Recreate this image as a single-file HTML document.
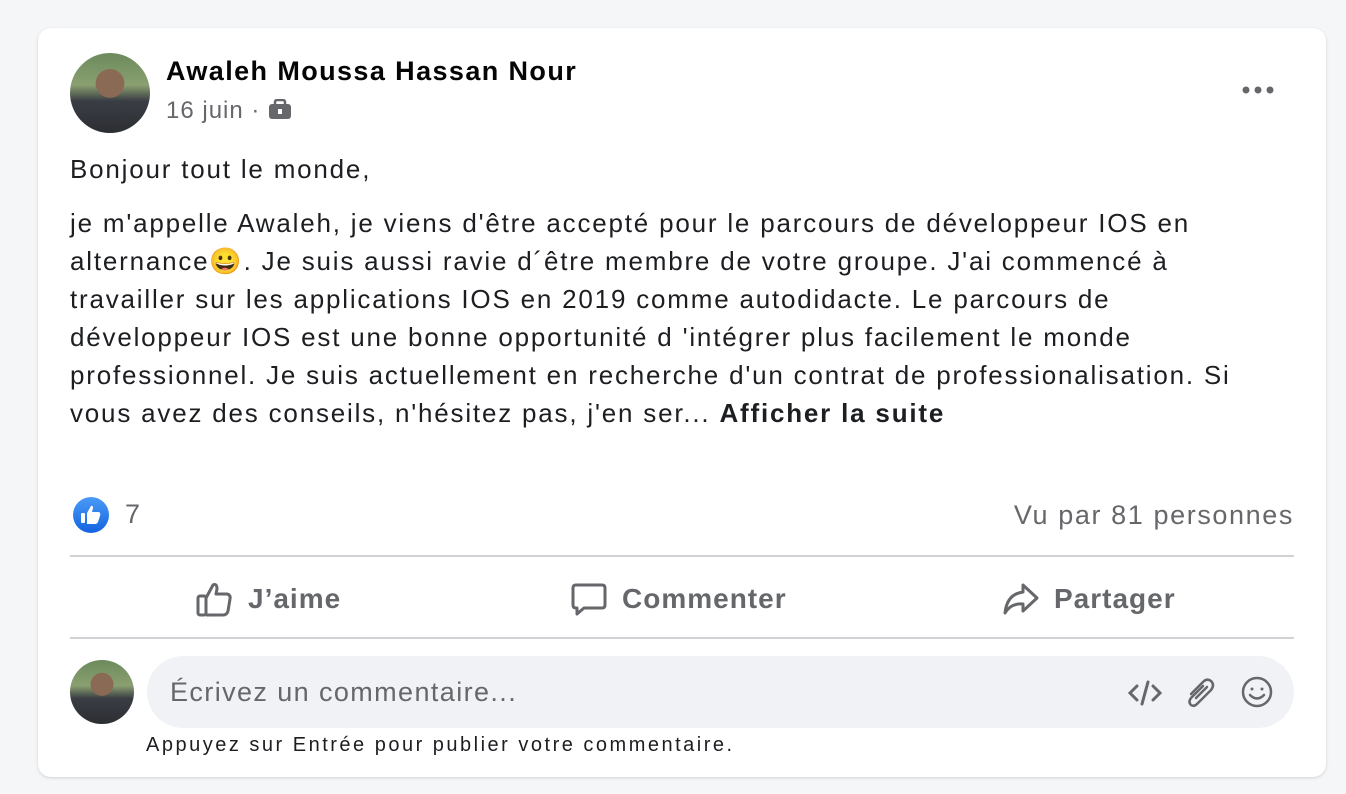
<!DOCTYPE html>
<html><head><meta charset="utf-8"><style>
*{box-sizing:border-box;margin:0;padding:0}
body{width:1346px;height:794px;background:#f5f6f8;font-family:"Liberation Sans",sans-serif;position:relative;overflow:hidden}
.card{position:absolute;left:38px;top:28px;width:1288px;height:749px;background:#fff;border-radius:13px;box-shadow:0 1px 3px rgba(0,0,0,.15)}
.abs{position:absolute;white-space:nowrap}
.av{border-radius:50%;background:radial-gradient(circle at 50% 38%,#8a6a55 0 22%,transparent 23%),linear-gradient(180deg,#6c8a5c 0%,#8aa070 40%,#3a3d44 60%,#2c2e33 100%);overflow:hidden}
.txt{left:32px;top:122px;font-size:26px;line-height:38px;color:#1c1e21;letter-spacing:1.8px}
.g{color:#65676b}
.line{position:absolute;left:32px;width:1224px;height:2px;background:#d0d2d6}
.btn{font-size:28px;font-weight:bold;color:#65676b;display:flex;align-items:center;gap:14px;letter-spacing:1px}
</style></head><body>
<div class="card">
 <div class="abs av" style="left:32px;top:25px;width:80px;height:80px"></div>
 <div class="abs" style="left:128px;top:28px;font-size:27px;font-weight:bold;color:#050505;letter-spacing:1.4px">Awaleh Moussa Hassan Nour</div>
 <div class="abs g" style="left:128px;top:69px;font-size:24px;letter-spacing:1px">16 juin · <svg width="24" height="22" viewBox="0 0 24 22" style="vertical-align:-3px"><rect x="1" y="5" width="22" height="15" rx="3" fill="#65676b"/><rect x="7" y="1" width="10" height="6" rx="2" fill="none" stroke="#65676b" stroke-width="2.5"/><rect x="10" y="10" width="4" height="5" fill="#fff"/></svg></div>
 <div class="abs" style="left:1203px;top:54px">
  <svg width="34" height="10"><circle cx="5" cy="5" r="3.5" fill="#65676b"/><circle cx="17" cy="5" r="3.5" fill="#65676b"/><circle cx="29" cy="5" r="3.5" fill="#65676b"/></svg></div>
 <div class="abs txt">Bonjour tout le monde,</div>
 <div class="abs txt" style="top:176px">je m'appelle Awaleh, je viens d'être accepté pour le parcours de développeur IOS en<br>alternance😀. Je suis aussi ravie d´être membre de votre groupe. J'ai commencé à<br>travailler sur les applications IOS en 2019 comme autodidacte. Le parcours de<br>développeur IOS est une bonne opportunité d 'intégrer plus facilement le monde<br>professionnel. Je suis actuellement en recherche d'un contrat de professionalisation. Si<br>vous avez des conseils, n'hésitez pas, j'en ser... <b>Afficher la suite</b></div>
 <svg class="abs" style="left:35px;top:469px" width="36" height="36" viewBox="0 0 36 36"><defs><linearGradient id="b" x1="0" y1="0" x2="0" y2="1"><stop offset="0" stop-color="#4a9bf7"/><stop offset="1" stop-color="#1463e0"/></linearGradient></defs><circle cx="18" cy="18" r="18" fill="url(#b)"/><rect x="8" y="16" width="4" height="10" rx="1" fill="#fff"/><path d="M14 16 L18 9 Q20 8 20 11 L19 15 H26 Q28 16 27 19 L25 25 Q24 27 22 27 H14 Z" fill="#fff"/></svg>
 <div class="abs g" style="left:87px;top:471px;font-size:27px">7</div>
 <div class="abs g" style="right:32px;top:472px;font-size:27px;letter-spacing:1.6px">Vu par 81 personnes</div>
 <div class="line" style="top:527px"></div>
 <div class="abs btn" style="left:158px;top:553px"><svg width="38" height="36" viewBox="0 0 38 36" fill="none" stroke="#65676b" stroke-width="3" stroke-linejoin="round"><rect x="2" y="15" width="8" height="19" rx="2"/><path d="M10 17 L17 4 Q21 2 21 8 L20 13 H31 Q35 14 34 18 L32 30 Q31 34 27 34 H10"/></svg>J’aime</div>
 <div class="abs btn" style="left:532px;top:553px"><svg width="38" height="36" viewBox="0 0 38 36" fill="none" stroke="#65676b" stroke-width="3" stroke-linejoin="round"><path d="M6 4 H32 Q35 4 35 7 V24 Q35 27 32 27 H14 L7 33 V27 H6 Q3 27 3 24 V7 Q3 4 6 4 Z"/></svg>Commenter</div>
 <div class="abs btn" style="left:964px;top:553px"><svg width="38" height="36" viewBox="0 0 38 36" fill="none" stroke="#65676b" stroke-width="3" stroke-linejoin="round"><path d="M21 4 L35 17 L21 30 V23 Q9 22 3 32 Q5 13 21 11 Z"/></svg>Partager</div>
 <div class="line" style="top:609px"></div>
 <div class="abs av" style="left:32px;top:632px;width:64px;height:64px"></div>
 <div class="abs" style="left:109px;top:628px;width:1147px;height:72px;background:#f0f2f5;border-radius:36px"></div>
 <div class="abs g" style="left:132px;top:649px;font-size:27px;letter-spacing:1.4px">Écrivez un commentaire...</div>
 <svg class="abs" style="left:1090px;top:650px" width="34" height="30" viewBox="0 0 34 30" fill="none" stroke="#65676b" stroke-width="3" stroke-linecap="round"><path d="M9 8 L2 15 L9 22 M25 8 L32 15 L25 22 M20 4 L14 26"/></svg>
 <svg class="abs" style="left:1145px;top:648px" width="34" height="34" viewBox="0 0 34 34" fill="none" stroke="#65676b" stroke-width="2.5" stroke-linecap="round"><path d="M20 10 L8 22 Q5 26 8 29 Q11 31 14 28 L28 14 Q32 9 28 5 Q24 2 20 6 L8 18 M24 11 L13 22"/></svg>
 <svg class="abs" style="left:1202px;top:647px" width="34" height="34" viewBox="0 0 34 34" fill="none" stroke="#65676b" stroke-width="2.5" stroke-linecap="round"><circle cx="17" cy="17" r="14"/><circle cx="12" cy="14" r="1.5" fill="#65676b" stroke="none"/><circle cx="22" cy="14" r="1.5" fill="#65676b" stroke="none"/><path d="M10 20 Q17 27 24 20"/></svg>
 <div class="abs" style="left:108px;top:706px;font-size:20px;color:#1c1e21;letter-spacing:2.5px">Appuyez sur Entrée pour publier votre commentaire.</div>
</div>
</body></html>
